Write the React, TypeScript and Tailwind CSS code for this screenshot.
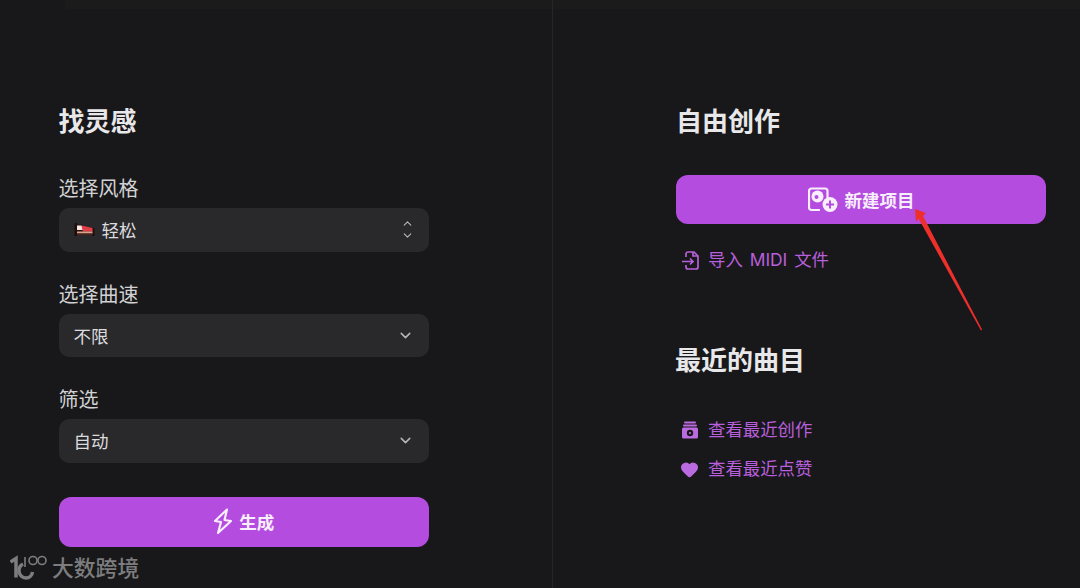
import React from 'react';
import { ChevronDown, ChevronUp, Heart } from 'lucide-react';

const FONT = 'font-["Inter","Noto_Sans_CJK_SC",sans-serif]';

const BedEmoji = () => (
  <svg width="21" height="15" viewBox="0 0 21 15" className="shrink-0">
    <path d="M0.500 1h2.500v13H0.500zM18 6h2.500v8H18z" fill="#1e0d0a" />
    <path d="M3 2.500l5 0 2.500 2.500 9 1v6H3z" fill="#2a1410" />
    <path d="M3 3.500h4.500l1.500 4.500H3z" fill="#f5e8e2" />
    <path d="M7.500 3.500L18.500 6v3.500H9z" fill="#e63c46" />
    <rect x="3" y="9.500" width="15.500" height="2" fill="#d8a58f" />
    <rect x="3" y="11.500" width="15.500" height="1.500" fill="#4a241c" />
  </svg>
);

const Field = ({ label, value, emoji, updown }: { label: string; value: string; emoji?: boolean; updown?: boolean }) => (
  <div className="mb-[29px]">
    <div className="h-[28px] leading-[28px] text-[20px] text-[#d2d2d4]">{label}</div>
    <div className="mt-[5px] h-[43.500px] rounded-[10px] bg-[#29292c] pl-[15px] pr-[15px] flex items-center justify-between">
      <div className="flex items-center gap-[7px] text-[17.500px] text-[#dcdcde]">
        {emoji && <BedEmoji />}
        <span className="pt-[3px]">{value}</span>
      </div>
      {updown ? (
        <div className="flex flex-col items-center -space-y-[1px] text-[#b8b8ba]">
          <ChevronUp size={13} strokeWidth={2} />
          <ChevronDown size={13} strokeWidth={2} />
        </div>
      ) : (
        <ChevronDown size={17} strokeWidth={2.2} className="text-[#b4b4b6]" />
      )}
    </div>
  </div>
);

const BoltIcon = () => (
  <svg width="20" height="27" viewBox="0 0 20 27" fill="none" className="shrink-0">
    <path d="M14 1.500L2 13l6 1-3 11 13-12-6.500-1z" stroke="#f8eefc" strokeWidth="2.200" strokeLinejoin="round" />
  </svg>
);

const NewProjectIcon = () => (
  <svg width="30" height="26" viewBox="0 0 30 26" fill="none" className="shrink-0">
    <path d="M12 23H3.500A2.500 2.500 0 0 1 1 20.500V4A2.500 2.500 0 0 1 3.500 1.500H17A2.500 2.500 0 0 1 19.500 4v7" stroke="#f8eefc" strokeWidth="2.200" />
    <circle cx="9.500" cy="9.500" r="6" fill="#f8eefc" />
    <circle cx="8.500" cy="10" r="2" fill="#b44ce0" />
    <circle cx="22" cy="17.500" r="7.500" fill="#f8eefc" />
    <path d="M22 13.500v8M18 17.500h8" stroke="#b44ce0" strokeWidth="2" />
  </svg>
);

const ImportIcon = () => (
  <svg width="18" height="19" viewBox="0 0 18 19" fill="none" stroke="currentColor" strokeWidth="1.700" className="shrink-0">
    <path d="M5 6V3a2 2 0 0 1 2-2h6l4 4v11a2 2 0 0 1-2 2H7a2 2 0 0 1-2-2v-2" />
    <path d="M12 1v4h5" />
    <path d="M1 10.500h11M9 7.500l3 3-3 3" />
  </svg>
);

const RecentIcon = () => (
  <svg width="18" height="18" viewBox="0 0 18 18" className="shrink-0">
    <rect x="3" y="0.500" width="12" height="2" rx="1" fill="#bb6be0" />
    <rect x="2" y="3.500" width="14" height="2" rx="1" fill="#bb6be0" />
    <path d="M2.500 6.500h13A1.500 1.500 0 0 1 17 8v8a1.500 1.500 0 0 1-1.500 1.500h-13A1.500 1.500 0 0 1 1 16V8a1.500 1.500 0 0 1 1.500-1.500z" fill="#bb6be0" />
    <circle cx="9" cy="12" r="3.200" fill="#18181a" />
    <circle cx="9" cy="12" r="1.100" fill="#bb6be0" />
  </svg>
);

const LinkRow = ({ icon, text, className }: { icon: React.ReactNode; text: string; className?: string }) => (
  <div className={`flex items-center gap-[7px] text-[17.400px] text-[#b85fdd] ${className ?? ''}`}>
    <span className="ml-[2px] w-[23px] flex justify-center">{icon}</span>
    <span>{text}</span>
  </div>
);

export default function App() {
  return (
    <div className={`relative h-[588px] w-[1080px] overflow-hidden bg-[#18181a] ${FONT}`}>
      <div className="absolute left-[65px] right-0 top-0 h-[9px] bg-[#1b1b1c]" />
      <div className="relative flex h-[588px]">
        <div className="w-[553px] border-r border-[#262628] pl-[58.500px] pt-[103px]">
          <div className="w-[370.500px] flex flex-col">
            <h2 className="h-[38px] leading-[38px] text-[26px] font-bold text-[#e8e8ea] mb-[34px]">找灵感</h2>
            <Field label="选择风格" value="轻松" emoji updown />
            <Field label="选择曲速" value="不限" />
            <Field label="筛选" value="自动" />
            <button className="mt-[5px] w-full h-[50px] rounded-[12px] bg-[#b44ce0] flex items-center justify-center gap-[6px] text-[17.500px] font-bold text-[#f8eefc]">
              <BoltIcon />
              <span className="pt-[3px]">生成</span>
            </button>
          </div>
        </div>
        <div className="flex-1 pl-[123px] pt-[103px]">
          <div className="w-[370px]">
            <h2 className="h-[38px] leading-[38px] text-[26px] font-bold text-[#e8e8ea] mb-[34px]">自由创作</h2>
            <button className="w-full h-[49px] rounded-[12px] bg-[#b44ce0] flex items-center justify-center gap-[7px] text-[17.500px] font-bold text-[#f8eefc]">
              <NewProjectIcon />
              <span className="pt-[3px]">新建项目</span>
            </button>
            <LinkRow className="mt-[23px] h-[26px] [word-spacing:2px]" icon={<ImportIcon />} text="导入 MIDI 文件" />
            <h2 className="mt-[69px] -ml-[1px] h-[38px] leading-[38px] text-[26px] font-bold text-[#e8e8ea]">最近的曲目</h2>
            <LinkRow className="mt-[37px] h-[26px]" icon={<RecentIcon />} text="查看最近创作" />
            <LinkRow className="mt-[13px] h-[26px]" icon={<Heart size={19} fill="currentColor" strokeWidth={1.500} className="text-[#bb6be0]" />} text="查看最近点赞" />
          </div>
        </div>
      </div>

      {/* red arrow annotation */}
      <svg className="absolute left-[900px] top-[200px]" width="90" height="135" viewBox="0 0 90 135">
        <path d="M15 9L26 13 23 16 82 129.500 81 130.500 18.500 18.500 16 22z" fill="#ee2f2a" />
      </svg>

      {/* watermark */}
      <div className="absolute left-[10px] top-[554px] flex items-center gap-[5px]">
        <svg width="37" height="28" viewBox="0 0 37 28" fill="none" stroke="#7d7d7f" strokeWidth="1.600">
          <path d="M0.500 8L6 4.500V23.500" strokeWidth="3.500" />
          <path d="M13 10a7.500 7.500 0 0 0-4 7c0 4 3.500 7 7 7s6-2.500 6.500-6" strokeWidth="3.500" />
          <path d="M15 3v10" />
          <circle cx="23" cy="6.500" r="4" />
          <circle cx="32" cy="6.500" r="4" />
        </svg>
        <span className="text-[21.800px] font-medium leading-[28px] text-[#7d7d7f]">大数跨境</span>
      </div>
    </div>
  );
}
